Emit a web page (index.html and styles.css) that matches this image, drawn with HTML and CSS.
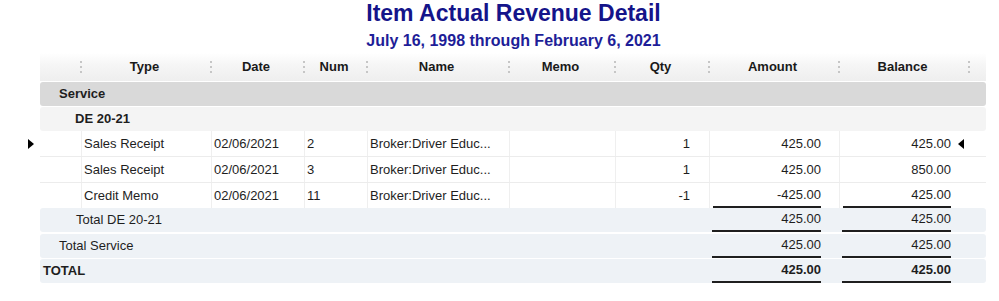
FILE: index.html
```html
<!DOCTYPE html>
<html>
<head>
<meta charset="utf-8">
<link rel="stylesheet" href="styles.css">
</head>
<body>
<div class="report">
  <header class="titles">
    <h1>Item Actual Revenue Detail</h1>
    <h2>July 16, 1998 through February 6, 2021</h2>
  </header>
  <div class="table">
    <div class="row head">
      <div class="hc"></div>
      <div class="hc sep">Type</div>
      <div class="hc sep">Date</div>
      <div class="hc sep">Num</div>
      <div class="hc sep">Name</div>
      <div class="hc sep">Memo</div>
      <div class="hc sep">Qty</div>
      <div class="hc sep">Amount</div>
      <div class="hc sep">Balance</div>
      <div class="hc sep"></div>
    </div>

    <div class="row group svc"><div class="glabel l1">Service</div></div>
    <div class="row group sub"><div class="glabel l2">DE 20-21</div></div>

    <div class="row data sel">
      <span class="mark-left"></span>
      <div class="c first"></div>
      <div class="c">Sales Receipt</div>
      <div class="c">02/06/2021</div>
      <div class="c">2</div>
      <div class="c">Broker:Driver Educ...</div>
      <div class="c"></div>
      <div class="c qty">1</div>
      <div class="c amt">425.00</div>
      <div class="c amt">425.00</div>
      <div class="c last"></div>
      <span class="mark-right"></span>
    </div>
    <div class="row data">
      <div class="c first"></div>
      <div class="c">Sales Receipt</div>
      <div class="c">02/06/2021</div>
      <div class="c">3</div>
      <div class="c">Broker:Driver Educ...</div>
      <div class="c"></div>
      <div class="c qty">1</div>
      <div class="c amt">425.00</div>
      <div class="c amt">850.00</div>
      <div class="c last"></div>
    </div>
    <div class="row data end">
      <div class="c first"></div>
      <div class="c">Credit Memo</div>
      <div class="c">02/06/2021</div>
      <div class="c">11</div>
      <div class="c">Broker:Driver Educ...</div>
      <div class="c"></div>
      <div class="c qty">-1</div>
      <div class="c amt-u"><span class="ul">-425.00</span></div>
      <div class="c amt-u"><span class="ul">425.00</span></div>
      <div class="c last"></div>
    </div>

    <div class="row tot t-sub">
      <div class="tlabel l2b">Total DE 20-21</div>
      <div class="amt-u"><span class="ul">425.00</span></div>
      <div class="amt-u"><span class="ul">425.00</span></div>
    </div>
    <div class="row tot t-svc">
      <div class="tlabel l1">Total Service</div>
      <div class="amt-u"><span class="ul">425.00</span></div>
      <div class="amt-u"><span class="ul">425.00</span></div>
    </div>
    <div class="row tot t-all">
      <div class="tlabel l0">TOTAL</div>
      <div class="amt-u"><span class="ul dbl">425.00</span></div>
      <div class="amt-u"><span class="ul dbl">425.00</span></div>
    </div>
  </div>
</div>
</body>
</html>
```

FILE: styles.css
```css
html, body {
  margin: 0;
  padding: 0;
  background: #ffffff;
}

body {
  font-family: "Liberation Sans", Arial, sans-serif;
  font-size: 13px;
  color: #1e1e1e;
}

.report {
  padding-left: 40px;
  width: 946px;
}

.titles {
  text-align: center;
  padding-left: 1px;
}

.titles h1 {
  margin: 0;
  font-size: 23px;
  line-height: 26px;
  font-weight: bold;
  color: #14148a;
}

.titles h2 {
  margin: 5px 0 0;
  font-size: 16px;
  line-height: 20px;
  font-weight: bold;
  color: #1e1e98;
}

.table {
  margin-top: 2px;
}

.row {
  display: grid;
  grid-template-columns: 41px 130px 93px 63px 142px 106px 94px 130px 130px 17px;
  position: relative;
  box-sizing: border-box;
}

.head {
  height: 28px;
  background: linear-gradient(to bottom, #ffffff 0%, #f6f6f6 40%, #eeeeee 100%);
  align-items: center;
}

.hc {
  position: relative;
  text-align: center;
  font-weight: bold;
  color: #1a1a1a;
  line-height: 28px;
  height: 28px;
  padding-right: 3px;
}

.hc.sep::before {
  content: "";
  position: absolute;
  left: -1px;
  top: 8px;
  width: 2px;
  height: 14px;
  background: repeating-linear-gradient(to bottom, #c6c6c6 0 2px, transparent 2px 5px);
}

.group {
  margin-top: 1px;
  height: 24px;
  border-radius: 3px;
  font-weight: bold;
  align-items: center;
}

.glabel {
  grid-column: 1 / -1;
  line-height: 24px;
}

.svc {
  background: #d9d9d9;
}

.sub {
  background: #f4f4f4;
}

.l0 { padding-left: 3px; }
.l1 { padding-left: 19px; }
.l2 { padding-left: 35px; }
.l2b { padding-left: 36px; }

.data {
  height: 26px;
  border-bottom: 1px solid #ececec;
  background: #ffffff;
}

.data.end {
  height: 25px;
  border-bottom: none;
}

.c {
  line-height: 26px;
  padding: 0 3px 0 2px;
  white-space: nowrap;
  overflow: hidden;
  border-left: 1px solid #efefef;
}

.c.first,
.c.last {
  border-left: none;
}

.data.end .c {
  line-height: 25px;
}

.qty {
  text-align: right;
  padding-right: 19px;
}

.amt {
  text-align: right;
  padding-right: 18px;
}

.c.amt-u {
  padding: 0;
}

.ul {
  display: block;
  margin: 0 18px 0 3px;
  text-align: right;
  line-height: 23px;
  border-bottom: 2px solid #1f1f1f;
}

.tot {
  height: 24px;
  background: #eef2f6;
  border-radius: 3px;
}

.tot .ul {
  line-height: 22px;
}

.tlabel {
  grid-column: 1 / 8;
  line-height: 24px;
}

.t-svc {
  margin-top: 2px;
}

.t-all {
  margin-top: 1px;
  font-weight: bold;
}

.tot .ul.dbl {
  border-bottom: 5px double #1f1f1f;
}

.mark-left {
  position: absolute;
  left: -12px;
  top: 8px;
  width: 0;
  height: 0;
  border-top: 5px solid transparent;
  border-bottom: 5px solid transparent;
  border-left: 6px solid #000000;
}

.mark-right {
  position: absolute;
  left: 918px;
  top: 8px;
  width: 0;
  height: 0;
  border-top: 5px solid transparent;
  border-bottom: 5px solid transparent;
  border-right: 6px solid #000000;
}
```
